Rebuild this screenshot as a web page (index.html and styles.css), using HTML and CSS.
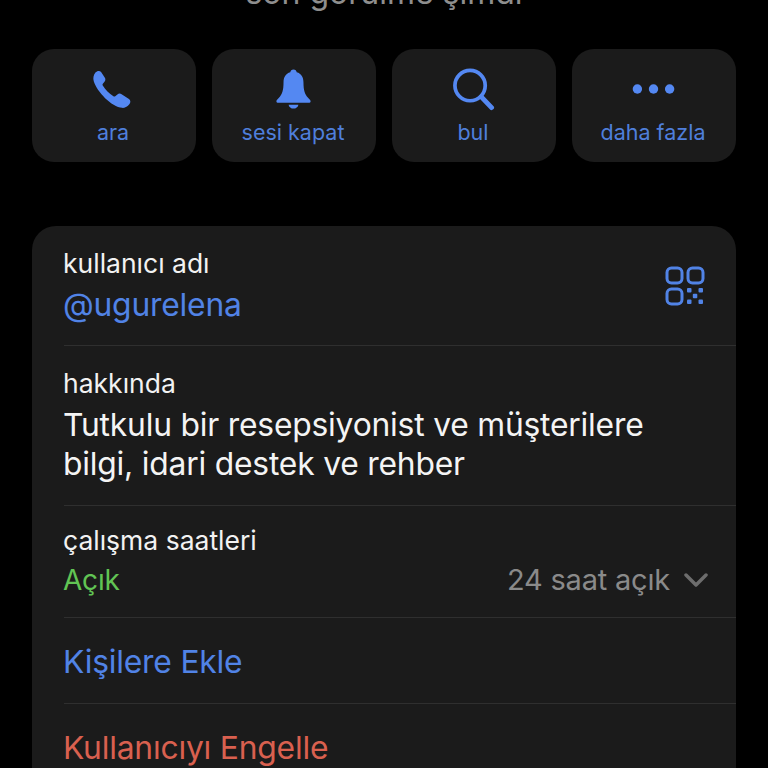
FILE: index.html
```html
<!DOCTYPE html>
<html lang="tr">
<head>
<meta charset="utf-8">
<title>Profil</title>
<link rel="stylesheet" href="styles.css">
</head>
<body>
<main class="page">
  <div class="status"><span>son görülme şimdi</span></div>
  <section class="actions">
    <div class="action">
      <svg class="action-icon" viewBox="0 0 44 44"><path class="fill" d="M3.500 4.700C5.300 2.500 8 2.500 9.300 4.100L13 9.800c1 1.500.9 3-.2 4.300l-1.700 2c-.5.6-.5 1.200-.1 1.900 2.500 4.200 6.700 8.400 10.900 11 .7.4 1.300.4 1.900-.1l2.200-1.900c1.300-1.100 2.800-1.200 4.300-.2l7.500 4.800c1.800 1.200 2 3.800.2 5.700-2 2.200-4.500 3.600-7 3.500C20 40 5 24 1.800 13.500.9 10.700 1.400 7.500 3.500 4.700Z"/></svg>
      <span>ara</span>
    </div>
    <div class="action">
      <svg class="action-icon" viewBox="0 0 44 44"><path class="fill" d="M22 1.500c1.900 0 3.100 1.200 3.300 2.900 4.800 1.300 6.900 5.300 6.900 10.300 0 8.300 1.400 12.500 4.700 15.800 1.700 1.800 2.600 2.500 2.600 3.400 0 1.100-.8 1.600-2 1.600H6.500c-1.200 0-2-.5-2-1.600 0-.9.900-1.600 2.600-3.400 3.300-3.300 4.700-7.500 4.700-15.800 0-5 2.100-9 6.900-10.300.2-1.700 1.400-2.900 3.300-2.900Z"/><path class="fill" d="M17 37.500h10c-.4 2.500-2.500 4-5 4s-4.600-1.500-5-4Z"/></svg>
      <span>sesi kapat</span>
    </div>
    <div class="action">
      <svg class="action-icon" viewBox="0 0 44 44"><circle class="line" cx="18.500" cy="18" r="15.500"/><path class="line thick" d="M30 29.500l10.500 11"/></svg>
      <span>bul</span>
    </div>
    <div class="action">
      <svg class="action-icon" viewBox="0 0 44 44"><circle class="fill" cx="5.500" cy="21.500" r="4.800"/><circle class="fill" cx="22" cy="21.500" r="4.800"/><circle class="fill" cx="38.500" cy="21.500" r="4.800"/></svg>
      <span>daha fazla</span>
    </div>
  </section>

  <section class="card">
    <div class="row row-user">
      <div class="stack">
        <div class="label">kullanıcı adı</div>
        <div class="value link">@ugurelena</div>
      </div>
      <svg class="qr" viewBox="0 0 40 40">
        <rect class="qr-box" x="2" y="2" width="15" height="15" rx="4.500"/>
        <rect class="qr-box" x="23" y="2" width="15" height="15" rx="4.500"/>
        <rect class="qr-box" x="2" y="23" width="15" height="15" rx="4.500"/>
        <rect class="qr-dot" x="22" y="22" width="4.500" height="4.500" rx="1"/>
        <rect class="qr-dot" x="33.500" y="22" width="4.500" height="4.500" rx="1"/>
        <rect class="qr-dot" x="27.800" y="27.800" width="4.500" height="4.500" rx="1"/>
        <rect class="qr-dot" x="22" y="33.500" width="4.500" height="4.500" rx="1"/>
        <rect class="qr-dot" x="33.500" y="33.500" width="4.500" height="4.500" rx="1"/>
      </svg>
    </div>
    <div class="row row-about">
      <div class="label">hakkında</div>
      <div class="value about">Tutkulu bir resepsiyonist ve müşterilere<br>bilgi, idari destek ve rehber</div>
    </div>
    <div class="row row-hours">
      <div class="label">çalışma saatleri</div>
      <div class="hours">
        <span class="value open">Açık</span>
        <span class="hours-right">
          <span class="value muted">24 saat açık</span>
          <svg class="chevron" viewBox="0 0 24 14"><path d="M2 2l10 10L22 2"/></svg>
        </span>
      </div>
    </div>
    <div class="row row-action"><span class="value link">Kişilere Ekle</span></div>
    <div class="row row-action"><span class="value danger">Kullanıcıyı Engelle</span></div>
  </section>
</main>
</body>
</html>
```
FILE: styles.css
```css
* { box-sizing: border-box; }
html, body { margin: 0; background: #000; }
body { font-family: Inter, "Liberation Sans", sans-serif; overflow: hidden; }
.page { width: 768px; height: 768px; overflow: hidden; padding: 0 32px; display: flex; flex-direction: column; }
.status { height: 11px; flex: none; overflow: hidden; display: flex; align-items: flex-end; justify-content: center; color: #8e8e8e; font-size: 32px; line-height: 36px; }
.status span { flex: none; }
.actions { margin-top: 38px; display: grid; grid-template-columns: repeat(4, 164px); gap: 16px; flex: none; }
.action { height: 113px; background: #1b1b1b; border-radius: 22px; display: flex; flex-direction: column; align-items: center; padding: 19px 2px 0 0; color: #4f7fdb; font-size: 21.500px; line-height: 26px; }
.action-icon { width: 43px; height: 43px; margin-bottom: 8px; flex: none; }
.fill { fill: #5488f2; }
.line { fill: none; stroke: #5488f2; stroke-width: 3.800; }
.thick { stroke-width: 5; stroke-linecap: round; }
.card { margin-top: 64px; background: #1b1b1b; border-radius: 24px 24px 0 0; padding-left: 32px; flex: none; }
.row { border-bottom: 1px solid #2f2f2f; }
.row:last-child { border-bottom: 0; }
.row-user { height: 120px; padding: 21px 31px 0 0; display: flex; justify-content: space-between; }
.stack { display: flex; flex-direction: column; }
.label { color: #f2f2f2; font-size: 26.500px; line-height: 32px; letter-spacing: 0; margin-left: -1px; }
.value { font-size: 31.800px; line-height: 40px; letter-spacing: -0.2px; margin-left: -1px; }
.row-user .value { margin-top: 6px; }
.link { color: #5183e6; }
.qr { width: 40px; height: 40px; margin-top: 19px; }
.qr-box { fill: none; stroke: #5183e6; stroke-width: 3; }
.qr-dot { fill: #5183e6; }
.row-about { height: 160px; padding-top: 21px; }
.about { color: #f4f4f4; margin-top: 6px; line-height: 39px; }
.row-hours { height: 112px; padding: 18px 28px 0 0; }
.hours { display: flex; justify-content: space-between; align-items: center; margin-top: 4px; }
.hours .value { font-size: 29px; }
.hours .open { font-size: 28px; }
.open { color: #61c454; }
.hours-right { display: flex; align-items: center; gap: 14px; }
.muted { color: #8a8a8a; }
.chevron { width: 24px; height: 14px; fill: none; stroke: #6d6d6d; stroke-width: 3.500; stroke-linecap: round; stroke-linejoin: round; }
.row-action { height: 86px; padding-top: 24px; }
.row-action .value { display: block; }
.danger { color: #d9604f; }
```
